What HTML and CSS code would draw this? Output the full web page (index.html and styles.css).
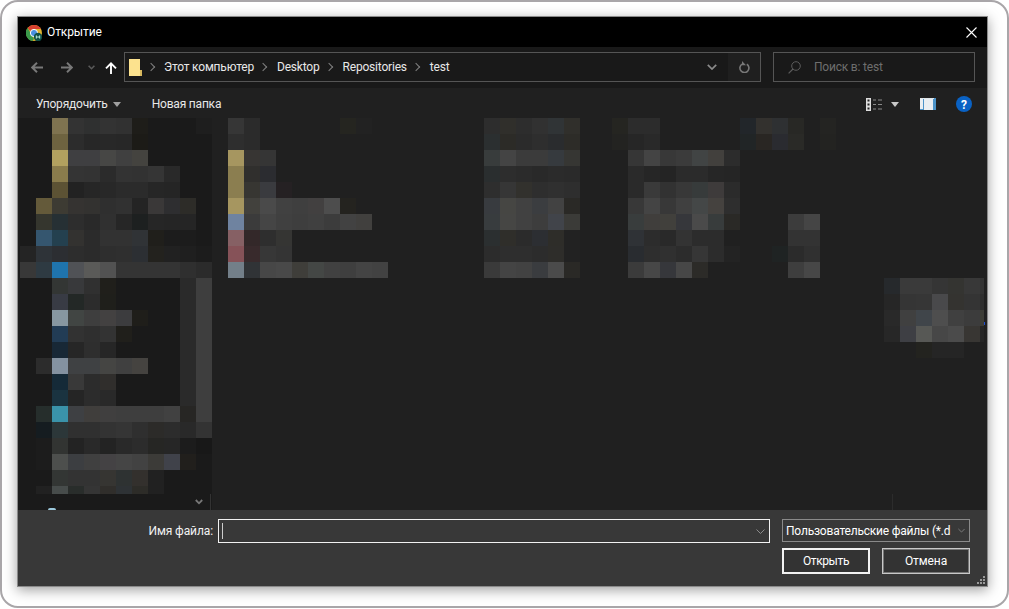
FILE: index.html
```html
<!DOCTYPE html>
<html lang="ru">
<head>
  <meta charset="utf-8">
  <title>Открытие</title>
  <link rel="stylesheet" href="styles.css">
</head>
<body>
  <div class="frame">
    <div class="dialog">
      <div class="titlebar">
        <svg class="app-icon" width="16" height="16" viewBox="0 0 16 16">
          <circle cx="8" cy="8" r="8" fill="#e0b530"/>
          <path d="M8 0a8 8 0 0 1 7 4H8a4 4 0 0 0-3.6 2.2L1.6 2.9A8 8 0 0 1 8 0z" fill="#d8402f"/>
          <path d="M1.6 2.9l3.2 5.4L8 14l-1.7 1.9A8 8 0 0 1 1.6 2.9z" fill="#3a9a4a"/>
          <circle cx="8" cy="8" r="3.6" fill="#4a90e0" stroke="#fff" stroke-width="1"/>
          <circle cx="12" cy="12" r="4.2" fill="#0f4f45"/>
          <path d="M10.3 10.4v3.2M13.7 10.4v3.2M10.3 12h3.4" stroke="#cfe" stroke-width=".9" fill="none"/>
        </svg>
        <span class="title">Открытие</span>
        <svg class="close" width="11" height="11" viewBox="0 0 11 11"><path d="M.5.5l10 10M10.5.5l-10 10" stroke="#fff" stroke-width="1.1"/></svg>
      </div>

      <div class="navbar">
        <div class="nav-buttons">
          <svg class="nav-back" width="12" height="11" viewBox="0 0 12 11"><path d="M12 5.5H1.5M6 .8L1.2 5.5 6 10.2" stroke="#787878" stroke-width="1.9" fill="none"/></svg>
          <svg class="nav-forward" width="12" height="11" viewBox="0 0 12 11"><path d="M0 5.5h10.5M6 .8l4.8 4.7L6 10.2" stroke="#787878" stroke-width="1.9" fill="none"/></svg>
          <svg class="nav-recent" width="7" height="5" viewBox="0 0 7 5"><path d="M.6.8l2.9 2.9L6.4.8" stroke="#5a5a5a" stroke-width="1.6" fill="none"/></svg>
          <svg class="nav-up" width="12" height="12" viewBox="0 0 12 12"><path d="M6 12V1.5M1 6.4l5-5 5 5" stroke="#fff" stroke-width="1.9" fill="none"/></svg>
        </div>
        <div class="address">
          <svg class="folder" width="13" height="17" viewBox="0 0 13 17"><path d="M0 0h11v11h2v6H0z" fill="#fce28e"/><path d="M11 11h2v6h-2z" fill="#d8b95f"/></svg>
          <span class="crumb-sep"></span><span class="crumb crumb-pc">Этот компьютер</span>
          <span class="crumb-sep"></span><span class="crumb">Desktop</span>
          <span class="crumb-sep"></span><span class="crumb">Repositories</span>
          <span class="crumb-sep"></span><span class="crumb">test</span>
          <svg class="address-drop" width="10" height="6" viewBox="0 0 10 6"><path d="M.8.8L5 5l4.200-4.200" stroke="#8a8a8a" stroke-width="1.7" fill="none"/></svg>
          <div class="refresh">
            <svg width="11" height="12" viewBox="0 0 11 12"><path d="M7.800 3.200a4.500 4.500 0 1 1-4.600-.1" stroke="#787878" stroke-width="1.600" fill="none"/><path d="M3 0v4.200h4z" fill="#787878"/></svg>
          </div>
        </div>
        <div class="search">
          <svg width="13" height="13" viewBox="0 0 13 13"><circle cx="8" cy="5" r="4.300" stroke="#5c5c5c" fill="none"/><path d="M5 8L.6 12.400" stroke="#5c5c5c" stroke-width="1.200"/></svg>
          <span>Поиск в: test</span>
        </div>
      </div>

      <div class="toolbar">
        <button class="tool organize">Упорядочить<i class="caret"></i></button>
        <button class="tool">Новая папка</button>
        <div class="tool-icons">
          <svg class="view-icon" width="16" height="13" viewBox="0 0 16 13">
            <path d="M0 0h5v13H0z" fill="#ddd"/>
            <path d="M1.500 1.500h2v2h-2zM1.500 5.500h2v2h-2zM1.500 9.500h2v2h-2z" fill="#222"/>
            <path d="M7 2h3M12 2h4M7 6.500h3M12 6.500h4M7 11h3M12 11h4" stroke="#8a8a8a"/>
          </svg>
          <i class="caret caret-view"></i>
          <svg class="pane-icon" width="16" height="12" viewBox="0 0 16 12"><path d="M0 0h16v12H0z" fill="#4c93c8"/><path d="M0 1h3v10H0zM4 1h9v11H4z" fill="#e9eef2"/><path d="M0 0h14v1H0z" fill="#dfe6ea"/></svg>
          <svg class="help-icon" width="16" height="16" viewBox="0 0 16 16"><circle cx="8" cy="8" r="8" fill="#0a62c4"/><text x="8" y="12.500" text-anchor="middle" class="help-mark">?</text></svg>
        </div>
      </div>

      <div class="content">
        <div class="sidebar">
          <div class="sidebar-foot">
            <i class="peek"></i>
            <svg class="side-scroll" width="8" height="6" viewBox="0 0 8 6"><path d="M.8 1L4 4.300 7.200 1" stroke="#777" stroke-width="1.800" fill="none"/></svg>
            <i class="side-divider"></i>
          </div>
        </div>
        <div class="files">
          <div class="files-foot"><i class="col-divider"></i></div>
        </div>
        <svg id="mosaic" class="mosaic" width="969" height="376" viewBox="18 118 969 376"></svg>
      </div>

      <div class="footer">
        <div class="footer-row">
          <label class="name-label">Имя файла:</label>
          <div class="name-input">
            <i class="text-caret"></i>
            <svg width="9" height="5" viewBox="0 0 9 5"><path d="M.5.5l4 4 4-4" stroke="#8c8c8c" fill="none"/></svg>
          </div>
          <div class="type-select">
            <span>Пользовательские файлы (*.d</span>
            <svg width="9" height="5" viewBox="0 0 9 5"><path d="M.5.5l4 4 4-4" stroke="#8c8c8c" fill="none"/></svg>
          </div>
        </div>
        <div class="footer-actions">
          <button class="btn btn-default">Открыть</button>
          <button class="btn">Отмена</button>
        </div>
        <svg class="grip" width="8" height="8" viewBox="0 0 8 8"><path d="M6 0h2v2H6zM3 3h2v2H3zM6 3h2v2H6zM0 6h2v2H0zM3 6h2v2H3zM6 6h2v2H6z" fill="#9a9a9a"/></svg>
      </div>
    </div>
  </div>
  <script src="mosaic.js"></script>
</body>
</html>
```

FILE: styles.css
```css
* {
  box-sizing: border-box;
}
html, body {
  margin: 0;
  background: #fff;
}
body {
  font-family: Roboto, "Noto Sans", sans-serif;
  font-size: 12px;
  color: #fff;
  width: 1009px;
  height: 609px;
  overflow: hidden;
}
button {
  font: inherit;
  color: inherit;
}
.frame {
  width: 1009px;
  height: 608px;
  border: 2px solid #a9a6a9;
  border-radius: 18px;
  padding: 14px 0 0 15px;
  background: #fff;
}
.dialog {
  width: 971px;
  height: 571px;
  border: 1px solid #8a8a8a;
  box-shadow: 0 3px 12px rgba(0, 0, 0, .38);
  display: flex;
  flex-direction: column;
  background: #202020;
}

/* title */
.titlebar {
  height: 30px;
  flex: none;
  background: #000;
  display: flex;
  align-items: center;
  padding: 0 10px 0 8px;
}
.app-icon {
  margin-top: 1px;
}
.title {
  margin-left: 5px;
  letter-spacing: -.1px;
}
.close {
  margin-left: auto;
  margin-top: 1px;
}

/* address row */
.navbar {
  height: 41px;
  flex: none;
  background: #191919;
  display: flex;
  padding-top: 5px;
}
.nav-buttons {
  width: 106px;
  height: 30px;
  flex: none;
  display: flex;
  align-items: center;
  padding-left: 13px;
}
.nav-forward {
  margin-left: 18px;
}
.nav-recent {
  margin-left: 15px;
}
.nav-up {
  margin-left: 10px;
  margin-top: 2px;
}
.address {
  width: 637px;
  height: 30px;
  flex: none;
  border: 1px solid #555;
  display: flex;
  align-items: center;
  padding-left: 4px;
}
.folder {
  flex: none;
}
.crumb {
  color: #e8e8e8;
  margin-top: -1px;
  letter-spacing: -.2px;
}
.crumb-pc {
  margin-left: -1px;
}
.crumb-sep {
  width: 23px;
  flex: none;
  position: relative;
  height: 8px;
}
.crumb-sep::after {
  content: "";
  position: absolute;
  left: 6px;
  top: 1px;
  width: 5px;
  height: 5px;
  border-top: 1.5px solid #808080;
  border-right: 1.5px solid #808080;
  transform: rotate(45deg);
}
.address-drop {
  margin-left: auto;
  margin-right: 11px;
}
.refresh {
  width: 32px;
  height: 28px;
  flex: none;
  background: #1f1f1f;
  display: flex;
  align-items: center;
  justify-content: center;
}
.search {
  width: 202px;
  height: 30px;
  flex: none;
  margin-left: 12px;
  border: 1px solid #555;
  display: flex;
  align-items: center;
  padding-left: 14px;
  color: #6e6e6e;
}
.search span {
  margin-left: 13px;
  margin-top: -1px;
  letter-spacing: -.2px;
}

/* toolbar */
.toolbar {
  height: 30px;
  flex: none;
  background: #202020;
  display: flex;
  align-items: center;
  padding: 2px 0 0 18px;
}
.tool {
  background: none;
  border: 0;
  padding: 0;
  color: #e8e8e8;
  display: flex;
  align-items: center;
  letter-spacing: -.2px;
}
.organize {
  margin-right: 31px;
}
.caret {
  display: block;
  width: 0;
  height: 0;
  margin-left: 5px;
  border-left: 4.500px solid transparent;
  border-right: 4.500px solid transparent;
  border-top: 5px solid #a0a0a0;
}
.tool-icons {
  margin-left: auto;
  display: flex;
  align-items: center;
  padding-right: 15px;
}
.caret-view {
  margin-left: 9px;
  border-top-color: #c8c8c8;
}
.pane-icon {
  margin-left: 21px;
}
.help-icon {
  margin-left: 20px;
}
.help-mark {
  font-size: 12px;
  font-weight: 700;
  fill: #fff;
}

/* mosaic panes */
.content {
  height: 392px;
  flex: none;
  position: relative;
  display: flex;
}
.sidebar {
  width: 194px;
  flex: none;
  background: #1a1a1a;
  display: flex;
  align-items: flex-end;
}
.sidebar-foot {
  width: 100%;
  height: 16px;
  position: relative;
  display: flex;
  align-items: center;
  justify-content: flex-end;
  padding-right: 9px;
}
.side-scroll {
  margin-top: -1px;
}
.side-divider {
  position: absolute;
  right: 1px;
  top: 0;
  bottom: 0;
  width: 1px;
  background: #333;
}
.peek {
  position: absolute;
  left: 30px;
  bottom: 0;
  width: 8px;
  height: 2px;
  border-radius: 4px 4px 0 0;
  background: #9cc9dc;
}
.files {
  flex: 1;
  background: #202020;
  display: flex;
  align-items: flex-end;
}
.files-foot {
  width: 100%;
  height: 16px;
  position: relative;
}
.col-divider {
  position: absolute;
  left: 680px;
  top: 0;
  bottom: 0;
  width: 1px;
  background: #2c2c2c;
}
.mosaic {
  position: absolute;
  left: 0;
  top: 0;
  pointer-events: none;
}

/* bottom */
.footer {
  flex: 1;
  background: #383838;
  padding: 9px 17px 0 0;
  position: relative;
}
.footer-row {
  display: flex;
  align-items: flex-start;
}
.name-label {
  width: 195px;
  flex: none;
  text-align: right;
  line-height: 24px;
  color: #f2f2f2;
  letter-spacing: -.1px;
}
.name-input {
  width: 552px;
  height: 24px;
  flex: none;
  margin-left: 5px;
  border: 1px solid #f2f2f2;
  display: flex;
  align-items: center;
  justify-content: space-between;
  padding: 0 4px 0 3px;
}
.text-caret {
  display: block;
  width: 1px;
  height: 16px;
  background: #ccc;
}
.type-select {
  width: 188px;
  height: 23px;
  flex: none;
  margin-left: 12px;
  border: 1px solid #8a8a8a;
  display: flex;
  align-items: center;
  padding: 0 4px 0 3px;
  overflow: hidden;
}
.type-select span {
  width: 172px;
  flex: none;
  overflow: hidden;
  white-space: nowrap;
  letter-spacing: -.2px;
}
.footer-actions {
  display: flex;
  justify-content: flex-end;
  gap: 12px;
  margin-top: 5px;
}
.btn {
  width: 88px;
  height: 26px;
  background: #333;
  border: 1px solid #c8c8c8;
  outline: 1px solid #777;
  outline-offset: -2px;
  padding: 0;
  letter-spacing: -.1px;
}
.btn-default {
  border: 2px solid #f2f2f2;
  outline: 0;
  letter-spacing: -.4px;
}
.grip {
  position: absolute;
  right: 2px;
  bottom: 2px;
}
```

FILE: mosaic.js
```js
// blurred file list: [top, left, colours of 16px cells], "-" leaves a cell empty
var cells = [
  // navigation pane
  [118, 52, "7f7350 333333 2f3030 333333 313131 1e1d19"],
  [118, 196, "1e1e1e"],
  [134, 52, "6e6340 2c2c2c 272727 282828 272727 1c1b17"],
  [150, 52, "b2a15f 3f3f41 3f3f41 474745 404040 44433f"],
  [166, 52, "8a7c4c 343434 333333 2b2b2b 333333 323232 353535 292929"],
  [182, 52, "5c5234 222222 262626 282828 2b2b2b 2b2b2b 262626 252525"],
  [198, 36, "645a3a 3d3b33 353331 333230 2f2f2f 313131 242424 3a3838 2e2e30 2d2c28"],
  [214, 36, "35362e 263034 2d2d2d 292929 303030 262626 1d2020 262626 252525 252525"],
  [230, 36, "35566f 24404f 333230 2b2b2b 323232 323232 303336 201f1b 1c1c1c 1c1c1c"],
  [246, 20, "242424 2e3338 2c2e32 2d2d2d 2b2b2b 2e2e2e 2f2f2f 2c2f33 23221e 212121 1f1f1f 1c1c1c"],
  [262, 20, "383838 2e3a42 1f74ad 505256 5a5a58 525252 343434 343434 343434 343434 2f2f2f 2b2b2b"],
  [278, 52, "333634 38393b 303030 201f1b - - - - 2a2a2a 3e3e3e"],
  [294, 52, "383b44 232826 2c2c2c 1f1f1b - - - - 2a2a2a 3e3e3e"],
  [310, 52, "8797a1 414543 3e3e3e 434141 3c3c3e 1f1e1a - - 2a2a2a 3e3e3e"],
  [326, 52, "223c55 323232 2f2f2f 333333 201f1b - - - 2a2a2a 3e3e3e"],
  [342, 52, "182836 262626 2e2e2e 262626 - - - - 2a2a2a 3e3e3e"],
  [358, 36, "2c2c2c 8492a1 3f4143 3f4143 454543 404040 454340 - - 2a2a2a 3e3e3e"],
  [374, 52, "152a38 393939 2c2c2c 302e2c - - - - 2a2a2a 3e3e3e"],
  [390, 52, "1a3340 252525 2c2c2c 292929 - - - - 2a2a2a 3e3e3e"],
  [406, 36, "262e2c 3a93aa 3e4043 403e3c 403f3f 3e3e3e 3e3e3e 3e3e3e 414141 272624 3e3e3e"],
  [422, 36, "151c20 2c3739 303030 303030 333333 353535 2f2f2f 2c2b29 2c2c2c 292929 333333"],
  [438, 36, "1c1c1c 323432 232323 292929 232323 292929 2c2c2c 262624 262626 1c1c1c 181818"],
  [454, 36, "1c1c1c 4d4f4d 3c3e41 404040 444244 454545 424242 3c3b38 40424a 211f1c"],
  [470, 52, "333634 333333 333333 363532 2e3232 33302d 212121"],
  [486, 36, "212121 474c4b 292d2b 353535 302e2b 2e3235 2d2c28 212121"],

  // names
  [118, 228, "363636 2b2b2b - - - - - 252520 222222"],
  [134, 228, "2e2e2e 2b2b2b"],
  [150, 228, "a69660 373533 353535"],
  [166, 228, "8b7e50 302f2d 2b2c30"],
  [182, 228, "8b7e50 373632 3a3b3f 252123"],
  [198, 228, "a69660 42413d 4a4a4a 414141 3f3f3f 424040 4d4d4d 24231f"],
  [214, 228, "6f83a0 3b3b3b 454545 404040 3e3e3e 404040 3c3c3c 424242 41403e"],
  [230, 228, "866064 332829 2e2e2e 353533"],
  [246, 228, "865258 382a2c 373737 343434"],
  [262, 228, "737f89 303336 474747 494949 3f3e3a 444745 414141 3f3f3f 444444 424242"],

  // dates
  [118, 484, "2d2d2d 302f2b 2d2d2d 313131 303436 302f2b"],
  [134, 484, "2b2f30 2c2b27 2b2b2b 2e2e2e 2a2c2e 2d2c28"],
  [150, 484, "383c3c 444444 3b3b3b 3b3b3b 363a3e 363633"],
  [166, 484, "2a2e2f 2d2d2d 2b2b2b 292929 2b2b2b 2a2a2a"],
  [182, 484, "2e2e2e 363636 32312d 2e2e2e 303030 2e2e2e"],
  [198, 484, "383b3f 464643 414141 3b3d40 424242 2a2926"],
  [214, 484, "383c3e 464644 414141 3d3d3d 41444a 3b3b38"],
  [230, 484, "2b2f30 2f2e2a 2b2b2b 2c2e32 2e2d29 222222"],
  [246, 484, "2c2c2c 2e2e2e 2e2e2e 2c2c2c 2e2d2a 222222"],
  [262, 484, "3a3a3a 444444 424242 3a3c3f 4b4b4b 2a2926"],

  // types
  [118, 612, "252521 2c2c2c 2c2c2c"],
  [134, 612, "232321 262626 292929"],
  [150, 628, "363636 444444 383838 3b3b3b 414444 42403d 2c2c2c"],
  [166, 628, "2a2a2a 262626 242424 2b2b2b 2b2b2b 262626 252525"],
  [182, 628, "2a2a2a 3a3a3a 323232 383838 373b3b 3e3b3b 2b2b2b"],
  [198, 628, "383838 444444 383838 404040 444747 45423f 2e2e2e"],
  [214, 628, "393d3d 403e3c 41403c 36373b 4a4a4a 383c3c 2a2926"],
  [230, 628, "2f3236 2c2c2c 292929 333333 2c2c2c 2c2c2c"],
  [246, 628, "292c30 2e2e2e 303030 2c2c2c 363636 2c2c2c 232323"],
  [262, 628, "3b3b3b 474747 36373b 474747 2c2b28"],

  // sizes
  [118, 740, "22262a 33312e 2e3032 282825 - 242422"],
  [134, 740, "212526 292623 2a2b30 2a2a27 - 232321"],
  [214, 788, "3c3c3c 454545"],
  [230, 788, "333333 333333"],
  [246, 772, "1f2323 2b2b2b 303030"],
  [262, 788, "3e3e3e 474747"],

  // preview pane
  [278, 884, "26292c 3a3a3a 3a3a3a 353535 343431 383838"],
  [294, 884, "262626 353535 363636 49494b 343330 343434"],
  [310, 884, "292929 404040 40454a 4e4e4e 404040 3c3c3c"],
  [326, 884, "272727 3e3f44 575855 474747 4b4b4b 383633"],
  [342, 916, "23231f 252525 252525"]
];

var svg = document.getElementById("mosaic");
var out = "";
cells.forEach(function (row) {
  row[2].split(" ").forEach(function (colour, i) {
    if (colour === "-") return;
    out += '<rect x="' + (row[1] + i * 16) + '" y="' + row[0] + '" width="16" height="16" fill="#' + colour + '"/>';
  });
});
// last column of the preview is cut short by the window
[["333333", 278], ["2e2e2e", 294], ["3c3c36", 310], ["262626", 326]].forEach(function (c) {
  out += '<rect x="980" y="' + c[1] + '" width="4" height="16" fill="#' + c[0] + '"/>';
});
out += '<rect x="984" y="322" width="1" height="3" fill="#1f4fd0"/>';
svg.innerHTML = out;
```
